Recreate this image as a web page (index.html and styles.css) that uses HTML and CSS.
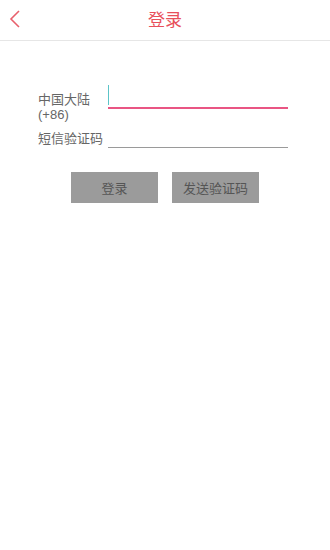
FILE: index.html
```html
<!DOCTYPE html>
<html lang="zh">
<head>
<meta charset="utf-8">
<title>登录</title>
<link rel="stylesheet" href="styles.css">
</head>
<body>
<div class="page">
  <header class="topbar">
    <span class="back">
      <svg width="12" height="18" viewBox="0 0 12 18"><path d="M10 1 L2 9 L10 17" fill="none" stroke="#e8606c" stroke-width="1.6"/></svg>
    </span>
    <h1 class="title">登录</h1>
  </header>
  <main class="form">
    <div class="row row-phone">
      <label class="label label-phone"><span class="l1">中国大陆</span><span class="l2">(+86)</span></label>
      <div class="field field-active"><span class="cursor"></span></div>
    </div>
    <div class="row row-code">
      <label class="label">短信验证码</label>
      <div class="field"></div>
    </div>
    <div class="actions">
      <button class="btn">登录</button>
      <button class="btn">发送验证码</button>
    </div>
  </main>
</div>
</body>
</html>
```
FILE: styles.css
```css
html, body {
  margin: 0;
  padding: 0;
  background: #fff;
}
body {
  font-family: "Noto Sans CJK SC", "Noto Sans", sans-serif;
}
.page {
  width: 330px;
}
.topbar {
  position: relative;
  height: 40px;
  border-bottom: 1px solid #e6e6e6;
  display: flex;
  align-items: center;
  justify-content: center;
}
.back {
  position: absolute;
  left: 9px;
  top: 10px;
  width: 12px;
  height: 18px;
}
.back svg { display: block; }
.title {
  margin: -3px 0 0 0;
  font-size: 17px;
  font-weight: normal;
  color: #e8505b;
  line-height: 20px;
}
.form {
  padding: 44px 42px 0 38px;
}
.row {
  display: flex;
}
.row-phone {
  align-items: flex-start;
}
.row-code {
  align-items: center;
  margin-top: 4px;
}
.label {
  width: 70px;
  font-size: 13px;
  line-height: 15px;
  color: #666;
  flex: none;
}
.label-phone {
  margin-top: 5px;
  display: flex;
  flex-direction: column;
}
.l1 {
  display: block;
  line-height: 18px;
}
.l2 {
  display: block;
  line-height: 15px;
  margin-top: -1px;
  font-family: "Liberation Sans", Arial, sans-serif;
}
.field {
  flex: 1;
  height: 21px;
  border-bottom: 1px solid #9a9a9a;
  position: relative;
}
.field-active {
  height: 22px;
  border-bottom: 2px solid #e95583;
}
.cursor {
  position: absolute;
  left: 0;
  top: 0;
  width: 1px;
  height: 20px;
  background: #5cc4c8;
}
.actions {
  display: flex;
  justify-content: center;
  gap: 14px;
  margin: 24px 0 0 -38px;
  width: 330px;
}
.btn {
  width: 87px;
  height: 31px;
  border: none;
  background: #9b9b9b;
  color: #555;
  font-family: "Noto Sans CJK SC", "Noto Sans", sans-serif;
  font-size: 13px;
  padding: 0;
}
```
